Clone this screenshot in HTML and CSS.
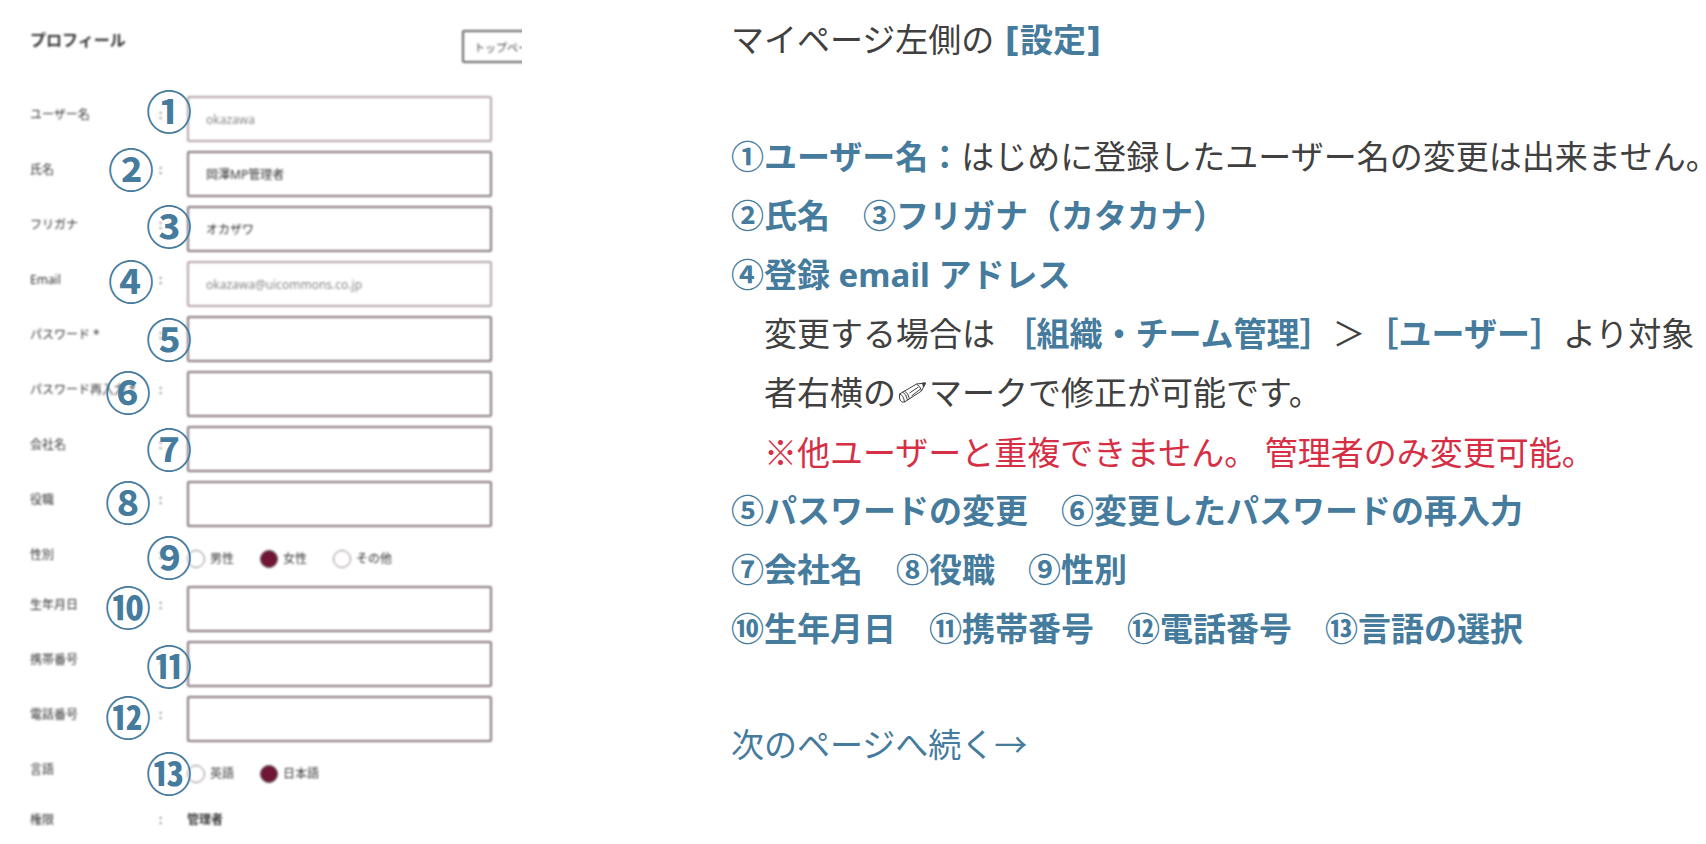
FILE: index.html
```html
<!DOCTYPE html>
<html lang="ja">

<head>
    <meta charset="utf-8">
    <title>プロフィール設定</title>
    <link rel="stylesheet" href="styles.css">
</head>

<body>
    <main class="page">
        <div class="capture">
            <form class="profile">
                <header class="profileHead">
                    <h1>プロフィール</h1>
                    <button type="button" class="topBtn">トップページ</button>
                </header>

                <div class="row">
                    <label for="userName">ユーザー名</label><span class="colon">:</span>
                    <input id="userName" type="text" value="okazawa" disabled>
                </div>
                <div class="row">
                    <label for="fullName">氏名</label><span class="colon">:</span>
                    <input id="fullName" type="text" value="岡澤MP管理者">
                </div>
                <div class="row">
                    <label for="kana">フリガナ</label><span class="colon">:</span>
                    <input id="kana" type="text" value="オカザワ">
                </div>
                <div class="row">
                    <label for="email">Email</label><span class="colon">:</span>
                    <input id="email" type="text" value="okazawa@uicommons.co.jp" disabled>
                </div>
                <div class="row">
                    <label for="pwd">パスワード *</label><span class="colon">:</span>
                    <input id="pwd" type="password">
                </div>
                <div class="row">
                    <label for="pwd2">パスワード再入力 *</label><span class="colon">:</span>
                    <input id="pwd2" type="password">
                </div>
                <div class="row">
                    <label for="company">会社名</label><span class="colon">:</span>
                    <input id="company" type="text">
                </div>
                <div class="row">
                    <label for="post">役職</label><span class="colon">:</span>
                    <input id="post" type="text">
                </div>
                <div class="row choice" role="radiogroup" aria-labelledby="genderName">
                    <span id="genderName" class="name">性別</span><span class="colon">:</span>
                    <div class="options">
                        <label><input type="radio" name="gender">男性</label>
                        <label><input type="radio" name="gender" checked>女性</label>
                        <label><input type="radio" name="gender">その他</label>
                    </div>
                </div>
                <div class="row">
                    <label for="birth">生年月日</label><span class="colon">:</span>
                    <input id="birth" type="text">
                </div>
                <div class="row">
                    <label for="mobile">携帯番号</label><span class="colon">:</span>
                    <input id="mobile" type="text">
                </div>
                <div class="row">
                    <label for="tel">電話番号</label><span class="colon">:</span>
                    <input id="tel" type="text">
                </div>
                <div class="row choice" role="radiogroup" aria-labelledby="langName">
                    <span id="langName" class="name">言語</span><span class="colon">:</span>
                    <div class="options">
                        <label><input type="radio" name="lang">英語</label>
                        <label><input type="radio" name="lang" checked>日本語</label>
                    </div>
                </div>
                <div class="row">
                    <span class="name">権限</span><span class="colon">:</span>
                    <span class="value">管理者</span>
                </div>
            </form>

            <!-- 番号 -->
            <span class="pin pin1">①</span>
            <span class="pin pin2">②</span>
            <span class="pin pin3">③</span>
            <span class="pin pin4">④</span>
            <span class="pin pin5">⑤</span>
            <span class="pin pin6">⑥</span>
            <span class="pin pin7">⑦</span>
            <span class="pin pin8">⑧</span>
            <span class="pin pin9">⑨</span>
            <span class="pin pin10">⑩</span>
            <span class="pin pin11">⑪</span>
            <span class="pin pin12">⑫</span>
            <span class="pin pin13">⑬</span>
        </div>

        <section class="guide">
            <p class="lead">マイページ左側の <b>[設定]</b></p>
            <p><b>①ユーザー名：</b>はじめに登録したユーザー名の変更は出来ません<span class="stop">。</span></p>
            <p><b>②氏名　③フリガナ（カタカナ）</b></p>
            <p><b>④登録 email アドレス</b></p>
            <p class="indent">変更する場合は <b>［組織・チーム管理］</b>＞<b>［ユーザー］</b>より対象者右横の<svg class="pencil" viewBox="0 0 30 24" role="img" aria-label="鉛筆">
                    <path d="M2 13 L19 3 L28 2 L24 10 L7 21 Q3 22 2 17 Z M19 3 Q23 5 24 10 M2 13 Q6 14 7 21 M5 11 Q9 13 10 19 M7 10 Q11 12 12 18 M12 12 L21 6 M14 15 L23 8" />
                    <path class="tip" d="M25 2 L28 2 L26 6 Z" />
                </svg>マークで修正が可能です。</p>
            <p class="indent note">※他ユーザーと重複できません。 管理者のみ変更可能。</p>
            <p><b>⑤パスワードの変更　⑥変更したパスワードの再入力</b></p>
            <p><b>⑦会社名　⑧役職　⑨性別</b></p>
            <p><b>⑩生年月日　⑪携帯番号　⑫電話番号　⑬言語の選択</b></p>
            <p class="next">次のページへ続く→</p>
        </section>
    </main>
</body>

</html>
```
FILE: styles.css
```css
* {
    box-sizing: border-box;
}

body {
    margin: 0;
    background: #fff;
    color: #404040;
    font-family: "Noto Sans", "Noto Sans CJK JP", sans-serif;
}

.page {
    display: flex;
    gap: 209px;
}

/* 左側：プロフィール画面 */
.capture {
    position: relative;
    flex: 0 0 522px;
    overflow: hidden;
}

.profile {
    display: flex;
    flex-direction: column;
    gap: 9px;
    padding: 30px 0 0 30px;
    font-size: 12px;
    line-height: 20px;
    color: #333;
    filter: blur(1px);
}

.profileHead {
    display: flex;
    align-items: flex-start;
    height: 57px;
}

.profileHead h1 {
    flex: 0 0 432px;
    margin: 0;
    font-size: 16px;
    line-height: 20px;
}

.topBtn {
    flex: none;
    height: 33px;
    padding: 0 10px;
    border: 2px solid #666;
    border-radius: 2px;
    background: #fff;
    color: #444;
    font-family: inherit;
    font-size: 11px;
}

.row {
    display: grid;
    grid-template-columns: 129px 28px 305px;
    align-items: start;
    min-height: 46px;
}

.row > label,
.name,
.colon,
.value {
    padding-top: 9px;
    white-space: nowrap;
}

.value {
    font-weight: 700;
}

.row > input {
    width: 100%;
    height: 46px;
    padding: 0 17px;
    border: 2px solid #857579;
    border-radius: 2px;
    background: #fff;
    color: #333;
    font-family: inherit;
    font-size: 12px;
}

.row > input:disabled {
    border-color: #b5a5a9;
    color: #888;
}

.choice {
    min-height: 41px;
}

.options {
    display: flex;
    gap: 26px;
    padding-top: 13px;
    font-size: 12px;
}

.options label {
    display: flex;
    align-items: center;
    gap: 5px;
}

.options input {
    appearance: none;
    width: 18px;
    height: 18px;
    margin: 0;
    border: 1px solid #94828a;
    border-radius: 50%;
}

.options input:checked {
    border-color: #555;
    background: #701535;
}

/* 番号の丸 */
.pin {
    position: absolute;
    width: 46px;
    height: 46px;
    color: #457b9d;
    font-family: "Noto Sans CJK JP", sans-serif;
    font-size: 46px;
    font-weight: 700;
    line-height: 46px;
}

.pin1 { left: 146px; top: 86px; }
.pin2 { left: 108px; top: 144px; }
.pin3 { left: 146px; top: 201px; }
.pin4 { left: 108px; top: 256px; }
.pin5 { left: 146px; top: 314px; }
.pin6 { left: 105px; top: 367px; }
.pin7 { left: 146px; top: 424px; }
.pin8 { left: 105px; top: 477px; }
.pin9 { left: 146px; top: 532px; }
.pin10 { left: 105px; top: 582px; }
.pin11 { left: 146px; top: 641px; }
.pin12 { left: 105px; top: 692px; }
.pin13 { left: 146px; top: 748px; }

/* 右側：説明 */
.guide {
    flex: 1;
    min-width: 0;
    padding-top: 11px;
    font-size: 33px;
    line-height: 59px;
}

.guide p {
    margin: 0;
}

.guide b {
    color: #457b9d;
}

.guide .lead {
    margin-bottom: 57px;
    font-family: "DejaVu Sans", "Noto Sans CJK JP", sans-serif;
}

/* 行末の句点は半角幅 */
.guide .stop {
    font-feature-settings: "halt";
}

.guide .indent {
    padding-left: 33px;
}

.guide .note {
    color: #d62f45;
    font-family: "Noto Sans CJK JP", sans-serif;
}

.guide .next {
    margin-top: 57px;
    color: #457b9d;
}

.pencil {
    width: 33px;
    height: 24px;
    fill: none;
    stroke: #404040;
    stroke-width: 1;
}

.pencil .tip {
    fill: #404040;
}
```
